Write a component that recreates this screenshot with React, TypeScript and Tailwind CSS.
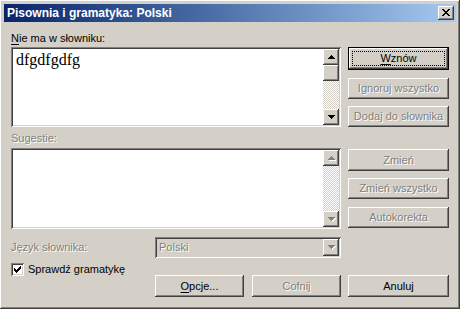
import type { ReactNode } from "react";

const raised =
  "shadow-[inset_-1px_-1px_0_#404040,inset_1px_1px_0_#ffffff,inset_-2px_-2px_0_#808080,inset_2px_2px_0_#d4d0c8]";
const sunken =
  "shadow-[inset_1px_1px_0_#808080,inset_-1px_-1px_0_#ffffff,inset_2px_2px_0_#404040,inset_-2px_-2px_0_#d4d0c8]";
const dim = "text-[#808080] [text-shadow:1px_1px_0_#ffffff]";

function Arrow({ up, disabled }: { up?: boolean; disabled?: boolean }) {
  const rows = up
    ? [
        [3, 1],
        [2, 3],
        [1, 5],
        [0, 7],
      ]
    : [
        [0, 7],
        [1, 5],
        [2, 3],
        [3, 1],
      ];
  return (
    <svg width="8" height="5" viewBox="0 0 8 5" shapeRendering="crispEdges">
      {disabled &&
        rows.map(([x, w], i) => (
          <rect key={"s" + i} x={x + 1} y={i + 1} width={w} height={1} fill="#ffffff" />
        ))}
      {rows.map(([x, w], i) => (
        <rect key={i} x={x} y={i} width={w} height={1} fill={disabled ? "#808080" : "#000000"} />
      ))}
    </svg>
  );
}

function ScrollBtn({ up, disabled }: { up?: boolean; disabled?: boolean }) {
  return (
    <div className={`w-[16px] h-[16px] bg-[#d4d0c8] flex items-center justify-center pl-[1px] ${raised}`}>
      <Arrow up={up} disabled={disabled} />
    </div>
  );
}

function Scrollbar({ thumb, disabled }: { thumb?: boolean; disabled?: boolean }) {
  return (
    <div className="w-[16px] h-full flex flex-col">
      <ScrollBtn up disabled={disabled} />
      {thumb && <div className={`w-[16px] h-[16px] bg-[#d4d0c8] ${raised}`} />}
      <div className="flex-1 bg-[repeating-conic-gradient(#ffffff_0_25%,#d4d0c8_0_50%)] bg-[length:2px_2px]" />
      <ScrollBtn disabled={disabled} />
    </div>
  );
}

function Btn({
  children,
  className,
  disabled,
  main,
}: {
  children: ReactNode;
  className: string;
  disabled?: boolean;
  main?: boolean;
}) {
  if (main) {
    return (
      <div className={`border border-black bg-[#d4d0c8] ${className}`}>
        <div className={`w-full h-full p-[3px] ${raised}`}>
          <div className="w-full h-full border border-dotted border-black flex items-center justify-center text-black">
            {children}
          </div>
        </div>
      </div>
    );
  }
  return (
    <div
      className={`bg-[#d4d0c8] flex items-center justify-center ${raised} ${
        disabled ? dim : "text-black"
      } ${className}`}
    >
      {children}
    </div>
  );
}

function Checkbox() {
  const cols = [2, 3, 4, 3, 2, 1, 0];
  return (
    <div className={`w-[13px] h-[13px] bg-white flex items-center justify-center ${sunken}`}>
      <svg width="7" height="7" viewBox="0 0 7 7" shapeRendering="crispEdges">
        {cols.map((y, x) => (
          <rect key={x} x={x} y={y} width={1} height={3} fill="#000000" />
        ))}
      </svg>
    </div>
  );
}

function CloseGlyph() {
  const rects = [
    [0, 0, 2], [6, 0, 2],
    [1, 1, 2], [5, 1, 2],
    [2, 2, 4],
    [3, 3, 2],
    [2, 4, 4],
    [1, 5, 2], [5, 5, 2],
    [0, 6, 2], [6, 6, 2],
  ];
  return (
    <svg width="8" height="7" viewBox="0 0 8 7" shapeRendering="crispEdges">
      {rects.map(([x, y, w], i) => (
        <rect key={i} x={x} y={y} width={w} height={1} fill="#000000" />
      ))}
    </svg>
  );
}

export default function App() {
  return (
    <div
      className={`w-[460px] h-[309px] bg-[#d4d0c8] p-[4px] flex flex-col font-['Liberation_Sans',Arial,sans-serif] text-[11px] leading-[13px] text-black select-none ${raised}`}
    >
      <div className="h-[18px] flex items-center bg-linear-to-r from-[#0a246a] to-[#a6caf0] pl-[3px] pr-[2px]">
        <span className="flex-1 text-white font-bold text-[12px]">Pisownia i gramatyka: Polski</span>
        <div className={`w-[16px] h-[14px] bg-[#d4d0c8] flex items-center justify-center pb-[1px] ${raised}`}>
          <CloseGlyph />
        </div>
      </div>

      <div className="flex-1 flex flex-col px-[7px]">
        <div className="flex gap-[7px] items-start">
          <div className="w-[330px] flex flex-col">
            <div className="mt-[10px] h-[13px]">
              <span className="underline underline-offset-2">N</span>ie ma w słowniku:
            </div>
            <div className={`mt-[2px] h-[80px] bg-white p-[2px] flex ${sunken}`}>
              <div className="flex-1 pl-[3px] pt-[2px] font-['Liberation_Serif','Times_New_Roman',serif] text-[16px] leading-[18px]">
                dfgdfgdfg
              </div>
              <Scrollbar thumb />
            </div>
            <div className={`mt-[5px] h-[13px] ${dim}`}>Sugestie:</div>
            <div className={`mt-[3px] h-[81px] bg-white p-[2px] flex ${sunken}`}>
              <div className="flex-1" />
              <Scrollbar disabled />
            </div>
          </div>

          <div className="w-[101px] flex flex-col">
            <Btn main className="mt-[25px] h-[23px]">
              <span>
                <span className="underline underline-offset-2">W</span>znów
              </span>
            </Btn>
            <Btn disabled className="mt-[8px] h-[21px]">Ignoruj wszystko</Btn>
            <Btn disabled className="mt-[7px] h-[21px]">Dodaj do słownika</Btn>
            <Btn disabled className="mt-[22px] h-[22px]">Zmień</Btn>
            <Btn disabled className="mt-[7px] h-[21px]">Zmień wszystko</Btn>
            <Btn disabled className="mt-[8px] h-[21px]">Autokorekta</Btn>
          </div>
        </div>

        <div className="mt-[8px] flex items-center h-[21px]">
          <div className={`w-[144px] ${dim}`}>Język słownika:</div>
          <div className={`w-[186px] h-[21px] bg-[#d4d0c8] p-[2px] flex ${sunken}`}>
            <div className={`flex-1 pl-[2px] flex items-center ${dim}`}>Polski</div>
            <div className={`w-[16px] h-[17px] bg-[#d4d0c8] flex items-center justify-center pl-[1px] ${raised}`}>
              <Arrow disabled />
            </div>
          </div>
        </div>

        <div className="flex items-start">
          <div className="w-[144px] mt-[5px] flex items-center gap-[4px] h-[13px]">
            <Checkbox />
            <span>Sprawdź gramatykę</span>
          </div>
          <Btn className="mt-[17px] w-[89px] h-[22px]">
            <span>
              <span className="underline underline-offset-2">O</span>pcje...
            </span>
          </Btn>
          <Btn disabled className="ml-[8px] mt-[17px] w-[89px] h-[22px]">Cofnij</Btn>
          <Btn className="ml-[7px] mt-[17px] w-[101px] h-[22px]">Anuluj</Btn>
        </div>
      </div>
    </div>
  );
}
